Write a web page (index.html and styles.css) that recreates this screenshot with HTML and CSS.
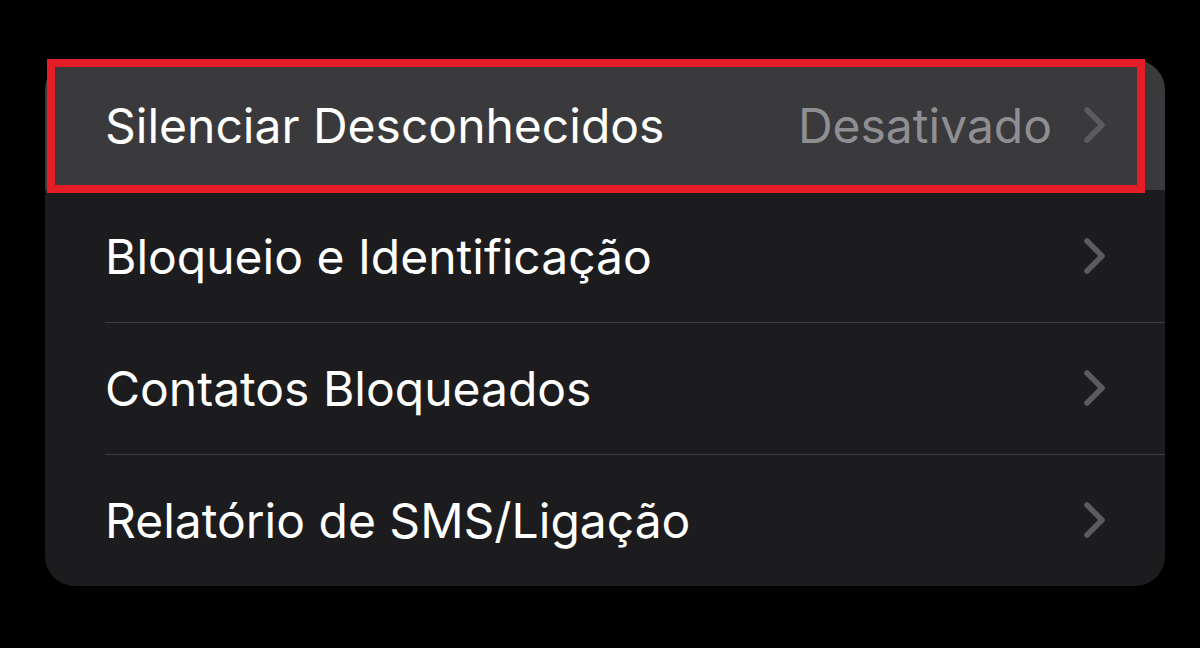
FILE: index.html
```html
<!DOCTYPE html>
<html lang="pt-BR">
<head>
  <meta charset="UTF-8" />
  <meta name="viewport" content="width=device-width, initial-scale=1.0"/>
  <title>Telefone</title>
  <link rel="stylesheet" href="styles.css">
</head>
<body>
  <div class="card">
    <div class="row active">
      <span class="label">Silenciar Desconhecidos</span>
      <span class="value">Desativado</span>
      <svg class="chev" viewBox="0 0 24 38" width="24" height="38"><path d="M4 4 L19 19 L4 34" /></svg>
      <div class="mark"></div>
    </div>
    <div class="row">
      <span class="label">Bloqueio e Identificação</span>
      <svg class="chev" viewBox="0 0 24 38" width="24" height="38"><path d="M4 4 L19 19 L4 34" /></svg>
    </div>
    <div class="row line">
      <span class="label">Contatos Bloqueados</span>
      <svg class="chev" viewBox="0 0 24 38" width="24" height="38"><path d="M4 4 L19 19 L4 34" /></svg>
    </div>
    <div class="row line">
      <span class="label">Relatório de SMS/Ligação</span>
      <svg class="chev" viewBox="0 0 24 38" width="24" height="38"><path d="M4 4 L19 19 L4 34" /></svg>
    </div>
  </div>
</body>
</html>
```

FILE: styles.css
```css
* { box-sizing: border-box; margin: 0; padding: 0; }
body { background: #000; font-family: Inter, "Noto Sans", sans-serif; height: 648px; overflow: hidden; }

.card { margin: 60px 0 0 45px; width: 1120px; background: #1c1c1e; border-radius: 30px; }

.row { position: relative; display: flex; align-items: center; height: 132px; padding: 0 58px 0 60px; }
.row.active { background: #3a3a3c; border-radius: 30px 30px 0 0; height: 130px; }
.row.line::before { content: ""; position: absolute; top: 0; left: 60px; right: 0; height: 1px; background: #3d3d41; }

.label { flex: 1; color: #fff; font-size: 48px; font-weight: 400; }
.value { color: #8e8e93; font-size: 48px; margin-right: 31px; }

.chev { display: block; }
.chev path { fill: none; stroke: #5c5c60; stroke-width: 5.5; stroke-linecap: round; stroke-linejoin: round; }

.mark { position: absolute; top: -1px; left: 2px; width: 1098px; height: 134px; border: 8px solid #e51d27; }
```
